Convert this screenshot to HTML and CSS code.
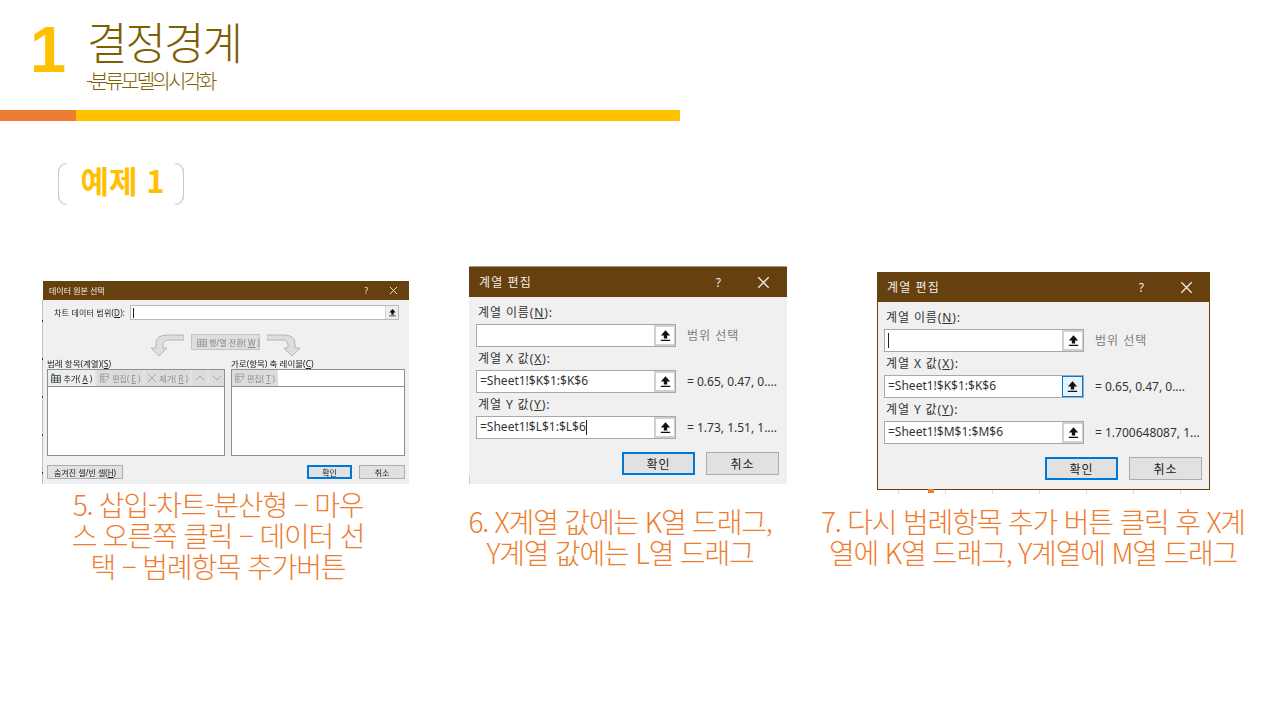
FILE: index.html
```html
<!DOCTYPE html>
<html lang="ko">
<head>
    <meta charset="UTF-8">
    <title>결정경계</title>
    <link rel="stylesheet" href="styles.css">
</head>
<body>
    <div class="slide">
        <header class="head">
            <div class="head-num">1</div>
            <div class="head-text">
                <h1>결정경계</h1>
                <p>-분류모델의시각화</p>
            </div>
        </header>
        <div class="rule"><span class="rule-accent"></span><span class="rule-main"></span></div>
        <div class="badge">예제 1</div>

        <div class="steps">
            <section class="step step-source">
                <div class="source dialog">
                    <div class="titlebar">
                        <span class="titlebar-text">데이터 원본 선택</span>
                        <span class="titlebar-help">?</span>
                        <svg class="titlebar-close" viewBox="0 0 10 10"><path d="M1 1L9 9M9 1L1 9"/></svg>
                    </div>
                    <div class="source-range">
                        <span class="source-range-label">차트 데이터 범위(<u>D</u>):</span>
                        <div class="source-range-input">
                            <i class="caret"></i>
                            <span class="picker">
                                <svg viewBox="0 0 10 10"><path class="picker-icon" d="M5 1L8.6 5H6.3V7.4H3.7V5H1.4ZM1.4 8.200H8.6V9.200H1.4Z"/></svg>
                            </span>
                        </div>
                    </div>
                    <div class="source-swap">
                        <svg class="swap-arrow" viewBox="0 0 34 23"><path d="M34 1V6H19Q13 6 13 11V14H17L9 22L1 14H6V10Q6 1 17 1Z"/></svg>
                        <span class="swap-btn">
                            <svg viewBox="0 0 10 10"><path d="M.5 2.500H9.500V9.500H.5ZM.5 5H9.500M.5 7.300H9.500M3.500 2.500V9.500M6.500 2.500V9.500"/></svg>
                            행/열 전환(<u>W</u>)
                        </span>
                        <svg class="swap-arrow swap-arrow-right" viewBox="0 0 34 23"><path d="M34 1V6H19Q13 6 13 11V14H17L9 22L1 14H6V10Q6 1 17 1Z"/></svg>
                    </div>
                    <div class="source-lists">
                        <div class="source-list source-list-series">
                            <div class="source-list-label">범례 항목(계열)(<u>S</u>)</div>
                            <div class="list-box">
                                <div class="list-tools">
                                    <span class="tool tool-add">
                                        <svg viewBox="0 0 10 10"><path class="icon-dark" d="M.5 2.500H9.500V9.500H.5ZM.5 5H9.500M.5 7.300H9.500M3.500 2.500V9.500M6.500 2.500V9.500"/><path class="icon-green" d="M2 0V3M.5 1.500H3.500"/></svg>
                                        추가(<u>A</u>)
                                    </span>
                                    <span class="tool tool-edit off">
                                        <svg viewBox="0 0 10 10"><path d="M.5 1H8.500V5L5 9H.5ZM.5 3.500H8.500M.5 6H5M3 1V9"/></svg>
                                        편집(<u>E</u>)
                                    </span>
                                    <span class="tool tool-remove off">
                                        <svg viewBox="0 0 10 10"><path d="M1 1L9 9M9 1L1 9"/></svg>
                                        제거(<u>R</u>)
                                    </span>
                                    <span class="tool tool-arrow off"><svg viewBox="0 0 10 10"><path d="M1 7L5 3L9 7"/></svg></span>
                                    <span class="tool tool-arrow off"><svg viewBox="0 0 10 10"><path d="M1 3L5 7L9 3"/></svg></span>
                                </div>
                            </div>
                        </div>
                        <div class="source-list source-list-axis">
                            <div class="source-list-label">가로(항목) 축 레이블(<u>C</u>)</div>
                            <div class="list-box">
                                <div class="list-tools list-tools-plain">
                                    <span class="tool tool-edit off">
                                        <svg viewBox="0 0 10 10"><path d="M.5 1H8.500V5L5 9H.5ZM.5 3.500H8.500M.5 6H5M3 1V9"/></svg>
                                        편집(<u>T</u>)
                                    </span>
                                </div>
                            </div>
                        </div>
                    </div>
                    <div class="source-foot">
                        <span class="btn btn-hidden">숨겨진 셀/빈 셀(<u>H</u>)</span>
                        <span class="btn btn-ok">확인</span>
                        <span class="btn">취소</span>
                    </div>
                </div>
                <p class="caption">5. 삽입-차트-분산형 – 마우<br>스 오른쪽 클릭 – 데이터 선<br>택 – 범례항목 추가버튼</p>
            </section>

            <section class="step step-series-a">
                <div class="series series-open dialog">
                    <div class="titlebar">
                        <span class="titlebar-text">계열 편집</span>
                        <span class="titlebar-help">?</span>
                        <svg class="titlebar-close" viewBox="0 0 10 10"><path d="M1 1L9 9M9 1L1 9"/></svg>
                    </div>
                    <div class="series-body">
                        <label class="series-label">계열 이름(<u>N</u>):</label>
                        <div class="series-row">
                            <div class="range-input"><span class="range-value"></span>
                                <span class="picker"><svg viewBox="0 0 10 10"><path class="picker-icon" d="M5 1L8.600 5H6.300V7.400H3.700V5H1.400ZM1.400 8.200H8.600V9.200H1.400Z"/></svg></span>
                            </div>
                            <span class="range-note range-note-muted">범위 선택</span>
                        </div>
                        <label class="series-label">계열 X 값(<u>X</u>):</label>
                        <div class="series-row">
                            <div class="range-input"><span class="range-value">=Sheet1!$K$1:$K$6</span>
                                <span class="picker"><svg viewBox="0 0 10 10"><path class="picker-icon" d="M5 1L8.600 5H6.300V7.400H3.700V5H1.400ZM1.400 8.200H8.600V9.200H1.400Z"/></svg></span>
                            </div>
                            <span class="range-note">= 0.65, 0.47, 0....</span>
                        </div>
                        <label class="series-label">계열 Y 값(<u>Y</u>):</label>
                        <div class="series-row">
                            <div class="range-input"><span class="range-value">=Sheet1!$L$1:$L$6<i class="caret"></i></span>
                                <span class="picker"><svg viewBox="0 0 10 10"><path class="picker-icon" d="M5 1L8.600 5H6.300V7.400H3.700V5H1.400ZM1.400 8.200H8.600V9.200H1.400Z"/></svg></span>
                            </div>
                            <span class="range-note">= 1.73, 1.51, 1....</span>
                        </div>
                        <div class="series-foot">
                            <span class="btn btn-ok">확인</span>
                            <span class="btn">취소</span>
                        </div>
                    </div>
                </div>
                <p class="caption">6. X계열 값에는 K열 드래그,<br>Y계열 값에는 L열 드래그</p>
            </section>

            <section class="step step-series-b">
                <div class="series series-framed dialog">
                    <div class="titlebar">
                        <span class="titlebar-text">계열 편집</span>
                        <span class="titlebar-help">?</span>
                        <svg class="titlebar-close" viewBox="0 0 10 10"><path d="M1 1L9 9M9 1L1 9"/></svg>
                    </div>
                    <div class="series-body">
                        <label class="series-label">계열 이름(<u>N</u>):</label>
                        <div class="series-row">
                            <div class="range-input"><span class="range-value"><i class="caret"></i></span>
                                <span class="picker"><svg viewBox="0 0 10 10"><path class="picker-icon" d="M5 1L8.600 5H6.300V7.400H3.700V5H1.400ZM1.400 8.200H8.600V9.200H1.400Z"/></svg></span>
                            </div>
                            <span class="range-note range-note-muted">범위 선택</span>
                        </div>
                        <label class="series-label">계열 X 값(<u>X</u>):</label>
                        <div class="series-row">
                            <div class="range-input"><span class="range-value">=Sheet1!$K$1:$K$6</span>
                                <span class="picker picker-hover"><svg viewBox="0 0 10 10"><path class="picker-icon" d="M5 1L8.600 5H6.300V7.400H3.700V5H1.400ZM1.400 8.200H8.600V9.200H1.400Z"/></svg></span>
                            </div>
                            <span class="range-note">= 0.65, 0.47, 0....</span>
                        </div>
                        <label class="series-label">계열 Y 값(<u>Y</u>):</label>
                        <div class="series-row">
                            <div class="range-input"><span class="range-value">=Sheet1!$M$1:$M$6</span>
                                <span class="picker"><svg viewBox="0 0 10 10"><path class="picker-icon" d="M5 1L8.600 5H6.300V7.400H3.700V5H1.400ZM1.400 8.200H8.600V9.200H1.400Z"/></svg></span>
                            </div>
                            <span class="range-note">= 1.700648087, 1...</span>
                        </div>
                        <div class="series-foot">
                            <span class="btn btn-ok">확인</span>
                            <span class="btn">취소</span>
                        </div>
                    </div>
                    <span class="peek-ticks"></span>
                    <span class="peek-marker"></span>
                </div>
                <p class="caption">7. 다시 범례항목 추가 버튼 클릭 후 X계<br>열에 K열 드래그, Y계열에 M열 드래그</p>
            </section>
        </div>
    </div>
</body>
</html>
```

FILE: styles.css
```css
* {
    box-sizing: border-box;
}
body {
    margin: 0;
    background-color: #ffffff;
    font-family: 'Noto Sans', 'Noto Sans CJK KR', sans-serif;
}
.slide {
    width: 1280px;
    height: 720px;
    overflow: hidden;
    background-color: #ffffff;
}

/* header */
.head {
    display: flex;
    height: 110px;
    padding: 11px 0 0 30px;
}
.head-num {
    width: 56px;
    margin-top: 1px;
    color: #ffc000;
    font-family: 'Liberation Sans', sans-serif;
    font-size: 65px;
    font-weight: 700;
    line-height: 76px;
}
.head-text {
    color: #7f6000;
    font-family: 'Noto Sans CJK KR', sans-serif;
}
.head-text h1 {
    margin: 0 0 0 1px;
    font-size: 44px;
    font-weight: 300;
    line-height: 60px;
    letter-spacing: -2px;
}
.head-text p {
    margin: -2px 0 0;
    font-size: 20px;
    font-weight: 300;
    line-height: 23px;
    letter-spacing: -2.800px;
}
.rule {
    display: flex;
    width: 680px;
    height: 11px;
}
.rule-accent {
    width: 76px;
    background-color: #ed7d31;
}
.rule-main {
    flex: 1;
    background-color: #ffc000;
}
.badge {
    position: relative;
    width: 126px;
    height: 42px;
    margin: 42px 0 0 58px;
    padding-left: 3px;
    border: 1px solid #c9c9c9;
    border-width: 0 1px;
    border-radius: 9px;
    color: #ffc000;
    font-family: 'Noto Sans CJK KR', sans-serif;
    font-size: 31px;
    font-weight: 700;
    line-height: 33px;
    text-align: center;
}
.badge::before,
.badge::after {
    content: "";
    position: absolute;
    left: -1px;
    right: -1px;
    height: 9px;
    border: 1px solid #c9c9c9;
    border-radius: 9px 9px 0 0;
    border-bottom: none;
    clip-path: polygon(0 0, 9px 0, 9px 100%, calc(100% - 9px) 100%, calc(100% - 9px) 0, 100% 0, 100% 100%, 0 100%);
    top: 0;
}
.badge::after {
    top: auto;
    bottom: 0;
    border-top: none;
    border-bottom: 1px solid #c9c9c9;
    border-radius: 0 0 9px 9px;
    clip-path: polygon(0 0, 100% 0, 100% 100%, calc(100% - 9px) 100%, calc(100% - 9px) 0, 9px 0, 9px 100%, 0 100%);
}

/* three columns */
.steps {
    display: flex;
    align-items: flex-start;
    padding-left: 43px;
}
.step-source {
    width: 366px;
    margin-top: 76px;
}
.step-series-a {
    width: 318px;
    margin: 61px 0 0 60px;
}
.step-series-b {
    width: 333px;
    margin: 67px 0 0 90px;
}
.caption {
    margin: 5px 16px 0 0;
    color: #ed7d31;
    font-family: 'Noto Sans CJK KR', sans-serif;
    font-size: 28px;
    font-weight: 300;
    line-height: 31px;
    letter-spacing: -1.200px;
    text-align: center;
    white-space: nowrap;
}
.step-series-a .caption {
    margin-top: 22px;
    margin-left: -40px;
    margin-right: -24px;
}
.step-series-b .caption {
    margin: 16px -49px 0 -70px;
}

/* shared dialog bits */
.dialog {
    position: relative;
    background-color: #f0f0f0;
    color: #333333;
    font-family: 'Noto Sans', 'Noto Sans CJK KR', sans-serif;
}
.titlebar {
    display: flex;
    align-items: center;
    background-color: #66400f;
    color: #f2ede6;
}
.titlebar-text {
    flex: 1;
}
.titlebar-close {
    fill: none;
    stroke: #f2ede6;
    stroke-width: 1;
}
.caret {
    display: inline-block;
    width: 1px;
    height: 15px;
    background-color: #222222;
    vertical-align: middle;
}
.picker {
    display: flex;
    align-items: center;
    justify-content: center;
    border-left: 2px solid #d0d0d0;
    background-color: #ffffff;
}
.picker-icon {
    fill: #111111;
}
.btn {
    display: flex;
    align-items: center;
    justify-content: center;
    border: 1px solid #adadad;
    background-color: #e1e1e1;
    color: #222222;
}
.btn-ok {
    border: 2px solid #0078d7;
}

/* source data dialog, drawn small and soft like a scaled capture */
.source {
    height: 203px;
    color: #222222;
    font-size: 8px;
    filter: blur(0.45px);
}
.source::before {
    content: "";
    position: absolute;
    top: 19px;
    left: -1px;
    width: 1px;
    height: 184px;
    background: repeating-linear-gradient(#c9bda8 0 20px, #3a3a3a 20px 22px, #c9bda8 22px 38px);
}
.source .titlebar {
    height: 19px;
    padding: 0 11px 0 6px;
}
.source .titlebar-help {
    margin-right: 21px;
}
.source .titlebar-close {
    width: 9px;
    height: 9px;
}
.source-range {
    display: flex;
    align-items: center;
    height: 15px;
    margin-top: 5px;
    padding-left: 11px;
}
.source-range-label {
    width: 76px;
    letter-spacing: .2px;
}
.source-range-input {
    display: flex;
    align-items: center;
    justify-content: space-between;
    width: 269px;
    height: 15px;
    padding-left: 2px;
    border: 1px solid #b8b8b8;
    background-color: #ffffff;
}
.source-range-input .caret {
    height: 10px;
}
.source-range-input .picker {
    width: 13px;
    height: 13px;
    border-left-width: 1px;
    background-color: #eeeeee;
}
.source-range-input .picker svg {
    width: 9px;
    height: 9px;
}
.source-swap {
    display: flex;
    align-items: flex-start;
    height: 24px;
    margin-top: 14px;
    padding-left: 107px;
}
.swap-arrow {
    width: 34px;
    height: 23px;
    fill: #dedede;
    stroke: #b4b4b4;
}
.swap-arrow-right {
    margin-left: 7px;
    transform: scaleX(-1);
}
.swap-btn {
    display: flex;
    align-items: center;
    gap: 2px;
    width: 69px;
    height: 16px;
    margin-left: 7px;
    padding-left: 5px;
    border: 1px solid #c4c4c4;
    background-color: #dedede;
    color: #858585;
    font-size: 8px;
    white-space: nowrap;
}
.swap-btn svg {
    flex: none;
    width: 10px;
    height: 10px;
    fill: none;
    stroke: #949494;
    stroke-width: .8;
}
.source-lists {
    display: flex;
    padding-left: 4px;
}
.source-list-series {
    width: 178px;
}
.source-list-axis {
    width: 174px;
    margin-left: 6px;
}
.source-list-label {
    height: 11px;
    font-size: 8.500px;
    line-height: 11px;
    white-space: nowrap;
}
.list-box {
    height: 87px;
    border: 1px solid #8f8f8f;
    background-color: #ffffff;
}
.list-tools {
    display: flex;
    gap: 2px;
    height: 17px;
    border-bottom: 1px solid #8f8f8f;
    background-color: #e4e4e4;
}
.list-tools-plain {
    background-color: #ffffff;
}
.tool {
    display: flex;
    align-items: center;
    justify-content: center;
    gap: 2px;
    height: 16px;
    background-color: #dcdcdc;
    font-size: 8px;
    white-space: nowrap;
}
.tool svg {
    flex: none;
    width: 10px;
    height: 10px;
    fill: none;
    stroke: #9a9a9a;
    stroke-width: .8;
}
.tool .icon-dark {
    stroke: #444444;
}
.tool .icon-green {
    stroke: #21a366;
    stroke-width: 1.2;
}
.tool-add {
    width: 48px;
    background-color: #ededed;
}
.tool-edit,
.tool-remove {
    width: 46px;
}
.tool-arrow {
    width: 15px;
}
.off {
    color: #8e8e8e;
}
.source-foot {
    display: flex;
    align-items: center;
    height: 14px;
    margin-top: 9px;
    padding-left: 4px;
    gap: 7px;
}
.source-foot .btn {
    width: 46px;
    height: 14px;
    font-size: 8px;
}
.source-foot .btn-hidden {
    width: 76px;
    margin-right: 177px;
}
.source-foot .btn-ok {
    width: 45px;
}

/* edit series dialogs */
.series {
    height: 218px;
    font-size: 12px;
    overflow: hidden;
}
.series-open {
    box-shadow: inset 1px 0 0 #d8ccb8;
}
.series .titlebar {
    height: 31px;
    padding: 0 17px 0 10px;
    font-size: 12px;
    letter-spacing: 1.100px;
}
.series-open .titlebar {
    border-top: 1px solid #a39a8c;
}
.series .titlebar-help {
    margin-right: 35px;
}
.series .titlebar-close {
    width: 13px;
    height: 13px;
}
.series-framed {
    overflow: visible;
    border: 1px solid #66400f;
    border-top: none;
}
.series-framed .titlebar {
    margin-right: -1px;
    margin-left: -1px;
    height: 30px;
}
.series-body {
    padding: 6px 0 0 7px;
    background-color: #f0f0f0;
}
.series-framed .series-body {
    padding-left: 6px;
}
.series-label {
    display: block;
    height: 21px;
    padding-left: 2px;
    font-size: 12px;
    line-height: 19px;
    letter-spacing: .9px;
    white-space: nowrap;
}
.series-row {
    display: flex;
    align-items: flex-start;
    height: 25px;
}
.range-input {
    display: flex;
    justify-content: space-between;
    flex: none;
    width: 200px;
    height: 23px;
    border: 1px solid #a8a8a8;
    background-color: #ffffff;
    line-height: 20px;
}
.range-value {
    padding-left: 3px;
    white-space: nowrap;
}
.picker {
    width: 21px;
}
.range-input .picker {
    border: 2px solid #d0d0d0;
    border-width: 2px 1px 2px 2px;
}
.range-input .picker-hover {
    border: 1px solid #0078d7;
    background-color: #e8f3fc;
}
.range-input .picker svg {
    width: 13px;
    height: 13px;
}
.range-note {
    margin-left: 11px;
    line-height: 23px;
    white-space: nowrap;
}
.range-note-muted {
    color: #7d7d7d;
    letter-spacing: 1px;
}
.series-foot {
    display: flex;
    gap: 11px;
    margin: 11px 0 0 146px;
}
.series-foot .btn {
    width: 73px;
    height: 23px;
    font-size: 12px;
    letter-spacing: 1px;
}
.series-framed .series-foot {
    margin-left: 161px;
}
.peek-ticks {
    position: absolute;
    left: 20px;
    right: 20px;
    bottom: -5px;
    height: 4px;
    background: repeating-linear-gradient(90deg, #d9d9d9 0 1px, transparent 1px 47px);
}
.peek-marker {
    position: absolute;
    left: 50px;
    bottom: -4px;
    width: 6px;
    height: 4px;
    background-color: #ed7d31;
}
```
